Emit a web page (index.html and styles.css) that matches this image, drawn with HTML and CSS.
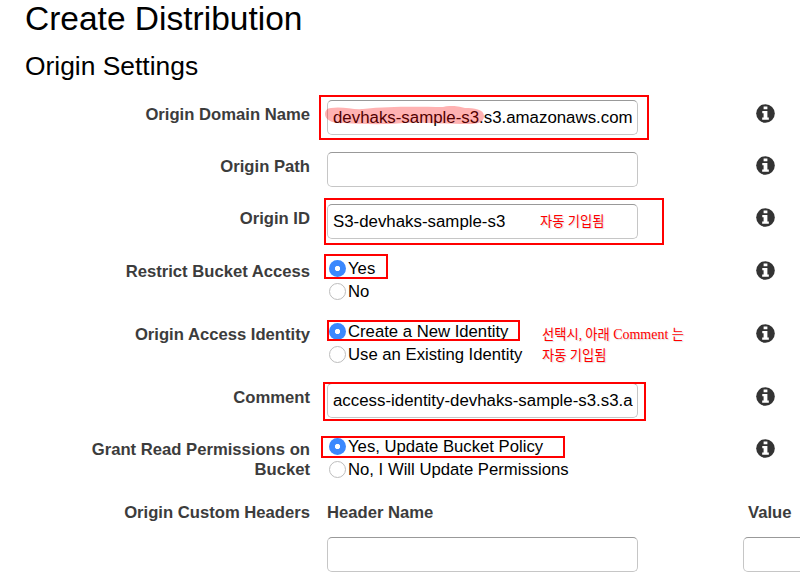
FILE: index.html
```html
<!DOCTYPE html>
<html lang="ko">
<head>
<meta charset="utf-8">
<title>Create Distribution</title>
<link rel="stylesheet" href="styles.css">
</head>
<body>
<svg class="defs" width="0" height="0" aria-hidden="true">
  <symbol id="info" viewBox="0 0 20 20">
    <circle cx="10" cy="10" r="9.8" fill="#333"/>
    <path fill="#fff" d="M8 2.7h4v2.8H8zM6.6 7.4h5.4v6.9h1.5v2.3h-7v-2.3H8V9.7H6.6z"/>
  </symbol>
</svg>
<main class="page">
  <h1 class="title">Create Distribution</h1>
  <h2 class="subtitle">Origin Settings</h2>
  <div class="row">
    <div class="label">Origin Domain Name</div>
    <div class="control">
      <div class="field"><span class="text domain">devhaks-sample-s3.s3.amazonaws.com</span></div>
      <svg class="marker" width="162" height="22" viewBox="0 0 162 22"><path fill="#ff0000" fill-opacity=".3" d="M7 2C18 0 29 4 39 3C67 0 95 1 119 1C127-1 134 0 141 2C150 2 160 3 160 10C160 16 155 18 145 18C118 18 101 16 80 17C58 19 38 18 20 17C9 18 1 14 1 8C1 5 3 2 7 2Z"/></svg>
      <div class="outline outline-domain"></div>
    </div>
    <svg class="info"><use href="#info"/></svg>
  </div>
  <div class="row">
    <div class="label">Origin Path</div>
    <div class="control"><div class="field"></div></div>
    <svg class="info"><use href="#info"/></svg>
  </div>
  <div class="row id-row">
    <div class="label">Origin ID</div>
    <div class="control">
      <div class="field"><span class="text">S3-devhaks-sample-s3</span></div>
      <div class="outline outline-id"></div>
      <div class="note note-id">자동 기입됨</div>
    </div>
    <svg class="info"><use href="#info"/></svg>
  </div>
  <div class="row choice-row">
    <div class="label">Restrict Bucket Access</div>
    <div class="control">
      <div class="options">
        <div class="option"><i class="radio checked"></i>Yes</div>
        <div class="option"><i class="radio"></i>No</div>
      </div>
      <div class="outline outline-access"></div>
    </div>
    <svg class="info"><use href="#info"/></svg>
  </div>
  <div class="row choice-row">
    <div class="label">Origin Access Identity</div>
    <div class="control">
      <div class="options">
        <div class="option"><i class="radio checked"></i>Create a New Identity</div>
        <div class="option"><i class="radio"></i>Use an Existing Identity</div>
      </div>
      <div class="outline outline-identity"></div>
      <div class="note note-identity">선택시, 아래 <span class="latin">Comment</span> 는<br>자동 기입됨</div>
    </div>
    <svg class="info"><use href="#info"/></svg>
  </div>
  <div class="row">
    <div class="label">Comment</div>
    <div class="control">
      <div class="field"><span class="text">access-identity-devhaks-sample-s3.s3.a</span></div>
      <div class="outline outline-comment"></div>
    </div>
    <svg class="info"><use href="#info"/></svg>
  </div>
  <div class="row choice-row">
    <div class="label">Grant Read Permissions on Bucket</div>
    <div class="control">
      <div class="options">
        <div class="option"><i class="radio checked"></i>Yes, Update Bucket Policy</div>
        <div class="option"><i class="radio"></i>No, I Will Update Permissions</div>
      </div>
      <div class="outline outline-grant"></div>
    </div>
    <svg class="info"><use href="#info"/></svg>
  </div>
  <div class="row headers-row">
    <div class="label">Origin Custom Headers</div>
    <div class="control">
      <div class="heading">Header Name</div>
      <div class="field"></div>
    </div>
    <div class="value">
      <div class="heading value-heading">Value</div>
      <div class="field"></div>
    </div>
  </div>
</main>
</body>
</html>
```

FILE: styles.css
```css
* { box-sizing: border-box; }
body {
  margin: 0;
  background: #fff;
  color: #000;
  font-family: "Liberation Sans", Arial, sans-serif;
  font-size: 16.7px;
  overflow: hidden;
}
.defs { position: absolute; }
.page { width: 800px; height: 581px; overflow: hidden; }
.title, .subtitle { margin: 0; padding-left: 25px; font-weight: 400; white-space: nowrap; }
.title { height: 48px; font-size: 33.5px; line-height: 38px; }
.subtitle { height: 43px; font-size: 26.4px; line-height: 36px; }
.row {
  display: grid;
  grid-template-columns: 310px 311px 19px;
  column-gap: 17px;
  height: 52px;
}
.row > .info { margin-left: 101px; }
.id-row { height: 53px; }
.choice-row { height: 63px; }
.label, .heading { color: #3c3c3c; font-weight: 700; font-size: 16.65px; line-height: 20px; }
.label { padding: 14px 0 0 80px; text-align: right; }
.control { position: relative; padding-top: 9px; }
.field {
  height: 35px;
  border: 1px solid #c6c6c6;
  border-top-color: #999;
  border-radius: 5px;
  padding-left: 5px;
  padding-right: 4px;
  background: #fff;
}
.text { display: block; overflow: hidden; white-space: nowrap; line-height: 33px; font-size: 16.85px; }
.options { padding-left: 2px; }
.option { display: flex; align-items: center; gap: 2px; height: 23px; line-height: 18px; white-space: nowrap; }
.radio { width: 17px; height: 17px; border: 1px solid #bdbdbd; border-radius: 50%; background: #fff; }
.radio.checked { border: 0; background: radial-gradient(circle, #fff 2.2px, #3b88fd 3px); }
.info { width: 19px; height: 19px; margin-top: 13px; }
.marker { position: absolute; left: -3px; top: 15px; }
.outline { position: absolute; border: 2px solid #f00; }
.outline-domain { left: -8px; top: 4px; width: 330px; height: 45px; }
.outline-id { left: -3px; top: 3px; width: 340px; height: 47px; }
.outline-access { left: -3px; top: 6px; width: 64px; height: 25px; }
.outline-identity { left: 0; top: 9px; width: 193px; height: 21px; }
.outline-comment { left: -4px; top: 8px; width: 323px; height: 39px; }
.outline-grant { left: -6px; top: 10px; width: 244px; height: 22px; }
.note {
  position: absolute;
  color: #f00;
  font: 400 13.3px/21px "Liberation Serif", "Noto Sans CJK KR", serif;
  text-shadow: 1px 1px 1px #ddd;
  white-space: nowrap;
}
.latin { font-size: 14px; }
.note-id { left: 213px; top: 16px; }
.note-identity { left: 215px; top: 13px; }
.headers-row { height: 92px; grid-template-columns: 310px 311px 200px; }
.headers-row .control { padding-top: 14px; }
.heading { height: 34px; }
.value { margin-left: 88px; padding-top: 14px; }
.value-heading { padding-left: 5px; }
```
